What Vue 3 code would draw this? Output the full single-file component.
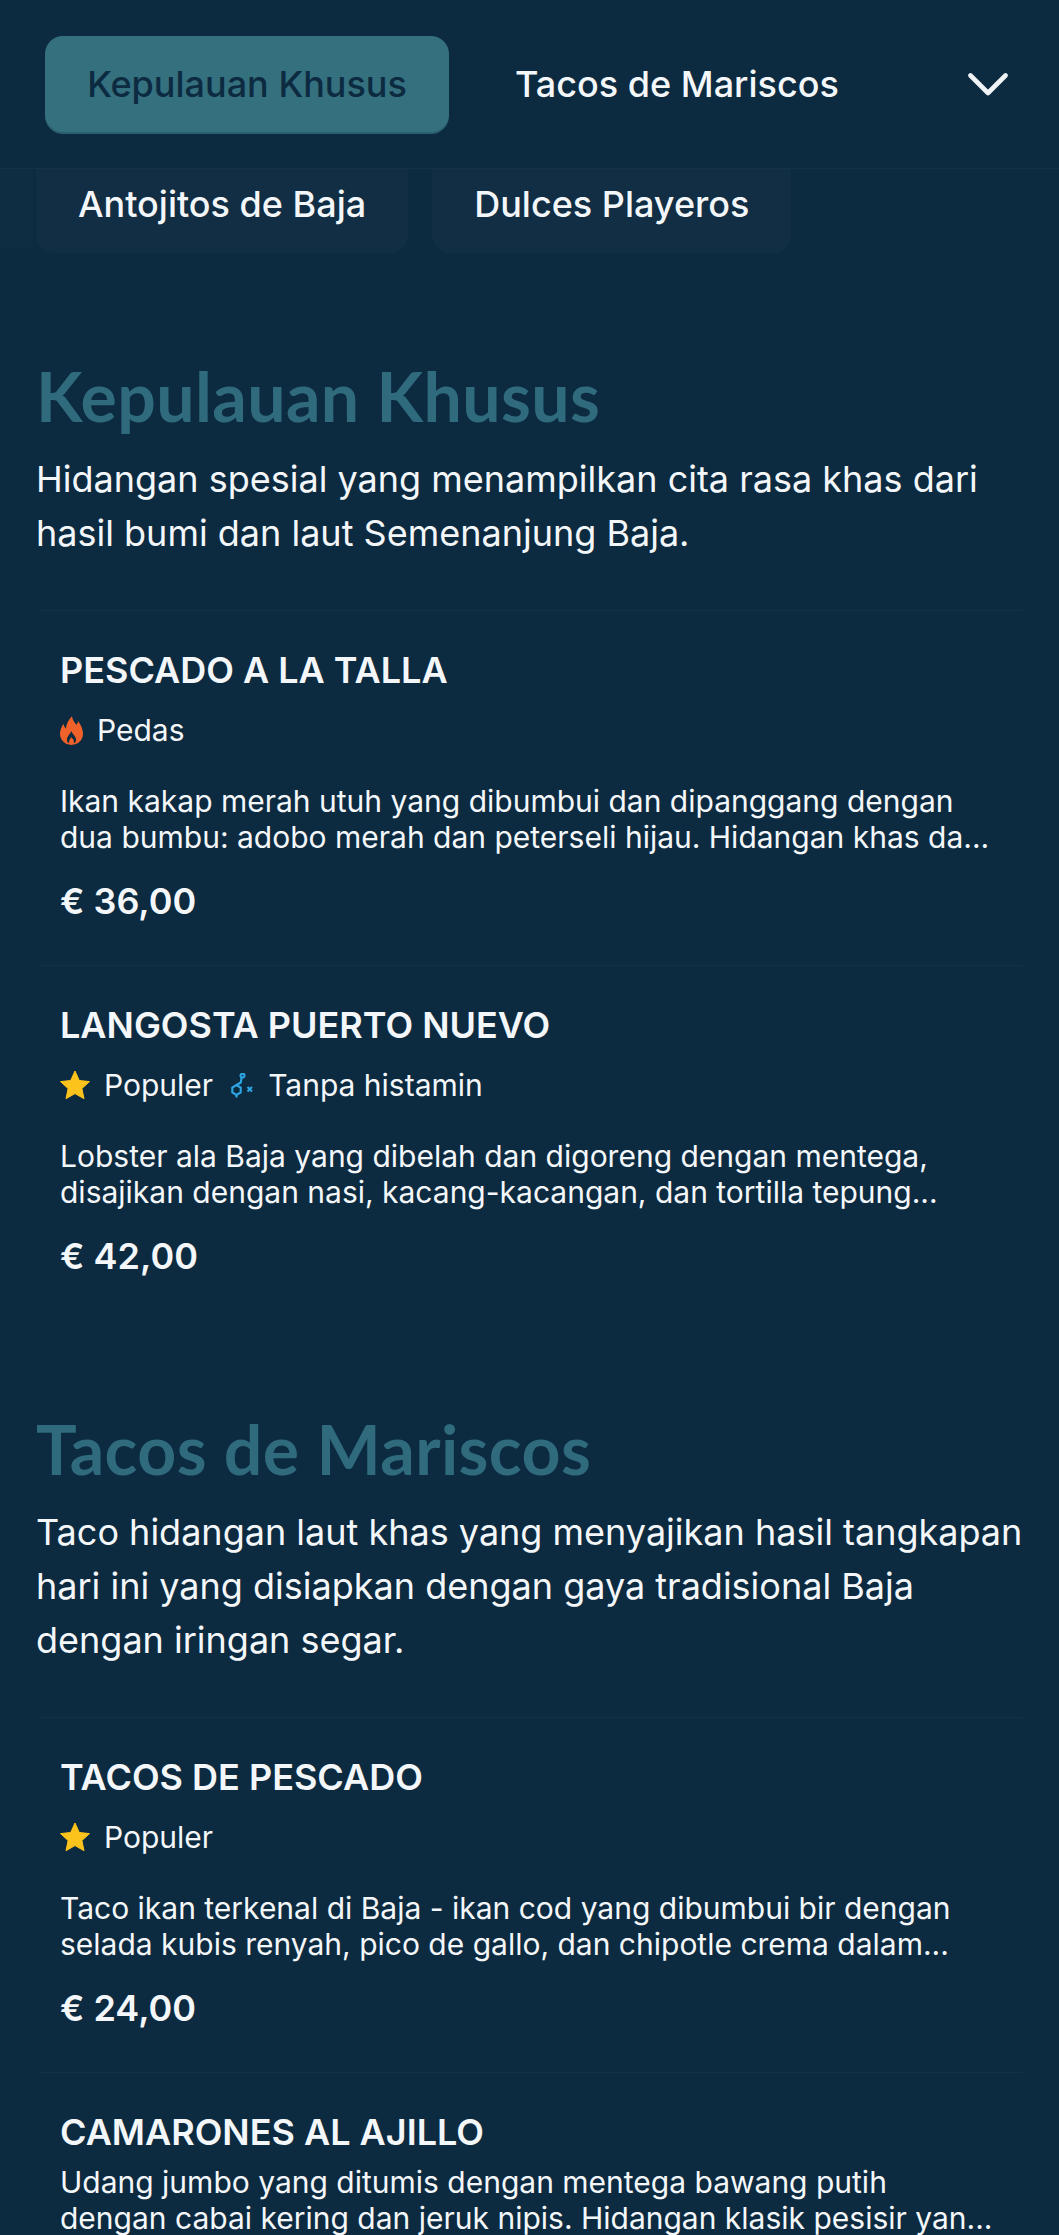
<script setup>
const tabs2 = ['Antojitos de Baja', 'Dulces Playeros']
const sections = [
  {
    title: 'Kepulauan Khusus',
    desc: 'Hidangan spesial yang menampilkan cita rasa khas dari hasil bumi dan laut Semenanjung Baja.',
    items: [
      { name: 'PESCADO A LA TALLA', tags: ['fire'], text: 'Ikan kakap merah utuh yang dibumbui dan dipanggang dengan\ndua bumbu: adobo merah dan peterseli hijau. Hidangan khas da...', price: '€ 36,00' },
      { name: 'LANGOSTA PUERTO NUEVO', tags: ['star', 'hist'], text: 'Lobster ala Baja yang dibelah dan digoreng dengan mentega,\ndisajikan dengan nasi, kacang-kacangan, dan tortilla tepung...', price: '€ 42,00' },
    ],
  },
  {
    title: 'Tacos de Mariscos',
    desc: 'Taco hidangan laut khas yang menyajikan hasil tangkapan hari ini yang disiapkan dengan gaya tradisional Baja dengan iringan segar.',
    items: [
      { name: 'TACOS DE PESCADO', tags: ['star'], text: 'Taco ikan terkenal di Baja - ikan cod yang dibumbui bir dengan\nselada kubis renyah, pico de gallo, dan chipotle crema dalam...', price: '€ 24,00' },
      { name: 'CAMARONES AL AJILLO', tags: [], text: 'Udang jumbo yang ditumis dengan mentega bawang putih\ndengan cabai kering dan jeruk nipis. Hidangan klasik pesisir yan...', price: '€ 28,00' },
    ],
  },
]
</script>

<template>
  <div class="page">
    <header class="bar">
      <button class="tab active">Kepulauan Khusus</button>
      <button class="tab">Tacos de Mariscos</button>
      <svg class="chev" viewBox="0 0 40 23" fill="none"><path d="M2.500 2.500 L20 20 L37.500 2.500" stroke="#f1f4f6" stroke-width="4.600" stroke-linecap="round" stroke-linejoin="round"/></svg>
    </header>
    <div class="row2">
      <div class="prev"></div>
      <div v-for="t in tabs2" :key="t" class="tab2">{{ t }}</div>
    </div>
    <section v-for="s in sections" :key="s.title" class="section">
      <h2>{{ s.title }}</h2>
      <p class="desc">{{ s.desc }}</p>
      <article v-for="it in s.items" :key="it.name" class="item" :class="{ notags: !it.tags.length }">
        <h3>{{ it.name }}</h3>
        <div v-if="it.tags.length" class="tags">
          <template v-for="t in it.tags" :key="t">
            <span v-if="t === 'fire'" class="tag">
              <svg class="ic fire" viewBox="0 0 24 30"><path fill="#f1622a" fill-rule="evenodd" d="M12.500 0C13 4 15 6 17 9C18.200 8 18.800 6.500 18.800 5C21.800 9 24 13.500 24 18.500C24 25 19 30 12 30C5 30 0 25 0 18.500C0 14.500 1.800 11 3.500 8C4 10 5 12 6.200 13C6.500 8 9 3.500 12.500 0ZM11.800 15.500C13 19 16.800 21 16.800 25C16.800 27 15.500 28 14.500 28.300C15 25.500 13.500 23.500 12 22C10.500 23.500 9 25.500 9.500 28.300C8.500 28 7.200 27 7.200 25C7.200 21 10.500 19 11.800 15.500Z"/></svg>
              Pedas
            </span>
            <span v-else-if="t === 'star'" class="tag">
              <svg class="ic star" viewBox="0 0 30 30"><path fill="#fdc31d" stroke="#fdc31d" stroke-width="1" stroke-linejoin="round" d="M15 1l4.300 9.500 10.200 1.100-7.600 7 2.100 10.100L15 23.600 6 28.700l2.100-10.100-7.600-7 10.200-1.100z"/></svg>
              Populer
            </span>
            <span v-else class="tag hist-tag">
              <svg class="ic hist" viewBox="0 0 24 25" fill="none" stroke="#2ea6e6" stroke-width="2.100"><circle cx="11.500" cy="2.600" r="2"/><path d="M10.600 4.500L9.800 9.500 5.500 12 1.300 14.500v5l4.200 2.500 4.200-2.500v-5L5.500 12"/><path d="M5.500 22v2.500M16.500 14l4.500 4.500M21 14l-4.500 4.500"/></svg>
              Tanpa histamin
            </span>
          </template>
        </div>
        <p class="text">{{ it.text }}</p>
        <div class="price">{{ it.price }}</div>
      </article>
    </section>
  </div>
</template>

<style>
html, body { margin: 0; background: #0c2a40; }
</style>

<style scoped>
.page {
  width: 1059px;
  height: 2235px;
  overflow: hidden;
  background: #0c2a40;
  font-family: Inter, "Liberation Sans", sans-serif;
  color: #f4f7f9;
}
.bar {
  height: 169px;
  box-sizing: border-box;
  display: flex;
  align-items: center;
  padding: 0 51px 0 45px;
  border-bottom: 1px solid #12324a;
  gap: 23px;
}
.tab {
  font: inherit;
  font-size: 36px;
  height: 96px;
  border: 0;
  border-radius: 18px;
  background: transparent;
  color: #f4f7f9;
  padding: 0 43px;
  font-weight: 500;
}
.tab.active { background: #35707f; color: #0c2a40; width: 404px; padding: 0; box-shadow: 0 2px 0 #2a5f70; }
.chev { width: 40px; height: 23px; margin-left: auto; }
.row2 { display: flex; gap: 24px; padding-right: 36px; }
.prev { width: 33px; height: 78px; margin-right: -21px; background: #0e2c42; }
.tab2 {
  font-size: 36px;
  font-weight: 500;
  background: #112e44;
  border-radius: 0 0 18px 18px;
  height: 84px;
  padding: 0 42px 15px;
  display: flex;
  align-items: center;
  box-sizing: border-box;
}
.section { padding: 0 36px; }
h2 {
  font-family: Lato, "Open Sans", sans-serif;
  font-size: 68px;
  letter-spacing: 0.4px;
  font-weight: 700;
  color: #2f6a7d;
  margin: 0;
  line-height: 80px;
  padding-top: 103px;
}
.section + .section h2 { padding-top: 89px; }
.desc { margin: 16px 0 0; font-size: 36px; line-height: 54px; }
.item { margin: 0 0 0 4px; padding: 37px 0 41px 20px; border-top: 1px solid #12324a; }
.desc + .item { margin-top: 50px; }
h3 { margin: 0; font-size: 36px; font-weight: 600; line-height: 44px; }
.tags { display: flex; gap: 18px; margin-top: 16px; font-size: 30px; height: 44px; align-items: center; }
.tag { display: flex; align-items: center; gap: 14px; }
.hist-tag { gap: 13px; }
.ic { display: block; }
.fire { width: 23px; height: 29px; }
.star { width: 30px; height: 30px; }
.hist { width: 24px; height: 25px; }
.text { margin: 31px 0 0; font-size: 30px; line-height: 36px; white-space: pre-line; }
.notags .text { margin-top: 10px; }
.price { margin-top: 23px; font-size: 36px; font-weight: 600; line-height: 46px; }
</style>
